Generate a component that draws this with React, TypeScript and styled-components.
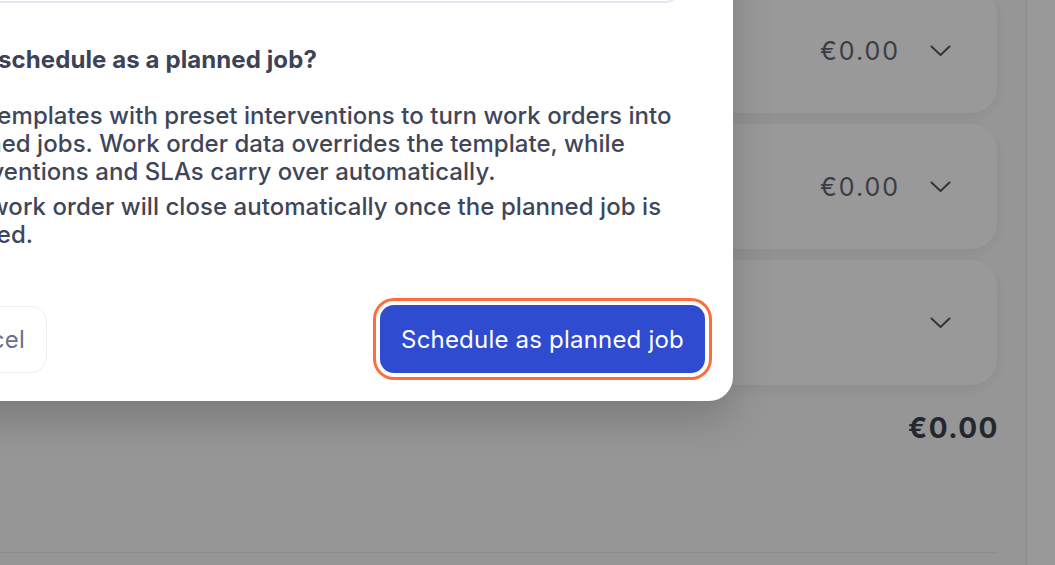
import React from "react";
import styled, { createGlobalStyle } from "styled-components";

type Line = {
    id: string;
    price?: string;
};

const lines: Array<Line> = [
    { id: "labour", price: "€0.00" },
    { id: "parts", price: "€0.00" },
    { id: "other" },
];

const Chevron = () => (
    <ChevronSvg width="21" height="12" viewBox="0 0 21 12" fill="none">
        <path
            d="M1.5 1.5 L10.5 10 L19.5 1.5"
            stroke="currentColor"
            strokeWidth="2"
            strokeLinecap="round"
            strokeLinejoin="round"
        />
    </ChevronSvg>
);

const App = () => {
    return (
        <>
            <GlobalStyle />
            <Page>
                <Main>
                    <CardList>
                        {lines.map((line) => (
                            <CostCard key={line.id}>
                                {line.price && <Price>{line.price}</Price>}
                                <Chevron />
                            </CostCard>
                        ))}
                    </CardList>
                    <Total>€0.00</Total>
                    <Divider />
                </Main>
                <Side />

                <Overlay />
                <Modal role="dialog">
                    <SearchField />
                    <Title>Why schedule as a planned job?</Title>
                    <Body>
                        <Paragraph>
                            Use templates with preset interventions to turn work orders into
                            <br />
                            planned jobs. Work order data overrides the template, while
                            <br />
                            interventions and SLAs carry over automatically.
                        </Paragraph>
                        <Paragraph>
                            The work order will close automatically once the planned job is
                            <br />
                            created.
                        </Paragraph>
                    </Body>
                    <Footer>
                        <CancelButton>Cancel</CancelButton>
                        <PrimaryButton>Schedule as planned job</PrimaryButton>
                    </Footer>
                </Modal>
            </Page>
        </>
    );
};

export default App;

const GlobalStyle = createGlobalStyle`
    html, body {
        margin: 0;
        padding: 0;
        overflow: hidden;
    }
    body {
        font-family: Inter, "Noto Sans", sans-serif;
        -webkit-font-smoothing: antialiased;
    }
    * {
        box-sizing: border-box;
    }
`;

const Page = styled.div`
    position: relative;
    width: 1055px;
    height: 565px;
    overflow: hidden;
    background: #fbfbfc;
    display: grid;
    grid-template-columns: 1027px 1fr;
`;

const Main = styled.div`
    display: flex;
    flex-direction: column;
    padding-right: 29px;
    border-right: 1px solid #e6e6f2;
`;

const CardList = styled.div`
    display: flex;
    flex-direction: column;
    gap: 11px;
    margin-top: -12px;
`;

const CostCard = styled.div`
    height: 125px;
    display: flex;
    align-items: center;
    justify-content: flex-end;
    gap: 30px;
    padding-right: 46px;
    background: #ffffff;
    border-radius: 26px;
    box-shadow: 0 4px 14px rgba(20, 24, 40, 0.07);
`;

const Price = styled.span`
    font-size: 25px;
    letter-spacing: 2px;
    color: #626776;
`;

const ChevronSvg = styled.svg`
    display: block;
    color: #555966;
`;

const Total = styled.div`
    margin-top: 26px;
    margin-right: -2px;
    text-align: right;
    font-size: 28px;
    line-height: 34px;
    font-weight: 700;
    letter-spacing: 1.5px;
    color: #3e414d;
`;

const Divider = styled.hr`
    margin: 107px 0 0;
    border: 0;
    border-top: 1px solid #e9e9f8;
`;

const Side = styled.div`
    background: #ffffff;
`;

const Overlay = styled.div`
    position: absolute;
    inset: 0;
    background: rgba(0, 0, 0, 0.4);
`;

const Modal = styled.div`
    position: absolute;
    left: -90px;
    top: -81px;
    width: 823px;
    padding: 28px;
    background: #ffffff;
    border-radius: 24px;
    box-shadow: 0 18px 40px rgba(0, 0, 0, 0.18);
    color: #404659;
`;

const SearchField = styled.div`
    height: 56px;
    margin-right: 25px;
    border: 2px solid #e2e6fd;
    border-radius: 14px;
`;

const Title = styled.h2`
    margin: 43px 0 0;
    font-size: 24px;
    line-height: 28px;
    font-weight: 700;
    letter-spacing: 0.1px;
    color: #3d4356;
`;

const Body = styled.div`
    margin-top: 28px;
    display: flex;
    flex-direction: column;
    gap: 7px;
`;

const Paragraph = styled.p`
    margin: 0;
    font-size: 24px;
    line-height: 28px;
    font-weight: 450;
    letter-spacing: 0.05px;
    white-space: nowrap;
`;

const Footer = styled.div`
    margin-top: 56px;
    margin-left: -15px;
    display: flex;
    align-items: center;
    justify-content: space-between;
`;

const ButtonBase = styled.button`
    height: 67px;
    padding: 0 21px;
    font-family: inherit;
    font-size: 24px;
    letter-spacing: 0.2px;
    border-radius: 16px;
    cursor: pointer;
`;

const CancelButton = styled(ButtonBase)`
    background: #ffffff;
    border: 1.5px solid #eceef4;
    color: #6b7190;
`;

const PrimaryButton = styled(ButtonBase)`
    width: 325px;
    height: 68px;
    border: 0;
    border-radius: 14px;
    background: #2f4bd0;
    color: #ffffff;
    box-shadow: 0 0 0 4px #ffffff, 0 0 0 7px #ff6c3a;
`;
